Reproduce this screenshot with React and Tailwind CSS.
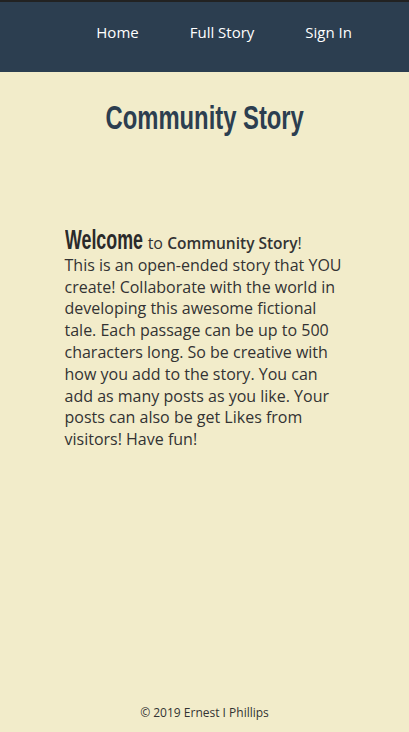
export default function App() {
  const sans = { fontFamily: '"Open Sans", sans-serif' };
  const cond = { fontFamily: '"Liberation Sans", Arial, sans-serif' };
  return (
    <div className="min-h-screen flex flex-col bg-[#f2ecca] text-[#333]" style={sans}>
      <nav className="h-[72px] bg-[#2c3e50] border-t-2 border-[#222] flex items-center justify-end pr-[57px] gap-[51px] text-white text-[15px] pb-[9px]">
        <span>Home</span>
        <span>Full Story</span>
        <span>Sign In</span>
      </nav>
      <div className="flex justify-center pt-[23px]">
        <h1 className="text-[34px] leading-[44px] font-bold text-[#2c3e50] whitespace-nowrap scale-x-[0.70]" style={cond}>
          Community Story
        </h1>
      </div>
      <main className="w-[280px] mx-auto pt-[87px] text-[16px] leading-[21.8px]">
        <p>
          <span className="inline-block w-[79px] whitespace-nowrap">
            <span className="inline-block origin-left scale-x-[0.66] text-[27px] font-bold leading-[28px] text-[#2a2a2a]" style={cond}>Welcome</span>
          </span>{" "}
          to <span className="font-semibold text-[15.5px]">Community Story</span>!
          <br />
          This is an open-ended story that YOU create! Collaborate with the world in developing this awesome fictional tale. Each passage can be up to 500 characters long. So be creative with how you add to the story. You can add as many posts as you like. Your posts can also be get Likes from visitors! Have fun!
        </p>
      </main>
      <footer className="mt-auto pb-[10px] text-center text-[12px]">
        © 2019 Ernest I Phillips
      </footer>
    </div>
  );
}
